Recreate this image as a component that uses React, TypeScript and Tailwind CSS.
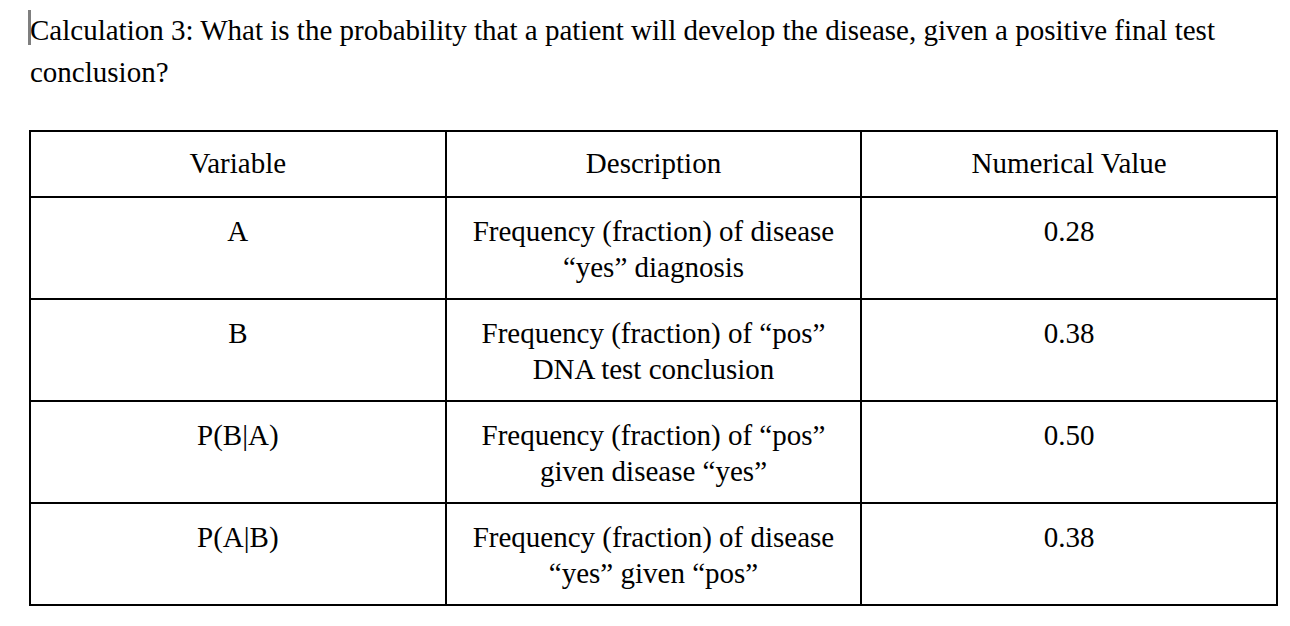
const rows = [
  { v: "A", d: ["Frequency (fraction) of disease", "“yes” diagnosis"], n: "0.28" },
  { v: "B", d: ["Frequency (fraction) of “pos”", "DNA test conclusion"], n: "0.38" },
  { v: "P(B|A)", d: ["Frequency (fraction) of “pos”", "given disease “yes”"], n: "0.50" },
  { v: "P(A|B)", d: ["Frequency (fraction) of disease", "“yes” given “pos”"], n: "0.38" },
];

export default function App() {
  return (
    <div className="min-h-[626px] w-[1290px] bg-white text-black font-['Liberation_Serif',serif] text-[29px]">
      {/* Question */}
      <div className="relative pl-[30px] pt-[9px] leading-[42px]">
        <span className="absolute left-[28px] top-[10px] h-[35px] w-[3px] bg-[#7f7f7f]" />
        <p>
          Calculation 3: What is the probability that a patient will develop the disease, given a positive final test
          <br />
          conclusion?
        </p>
      </div>

      {/* Table */}
      <div className="pl-[29px] pt-[37px]">
        <table className="w-[1249px] table-fixed border-collapse border-2 border-black">
          <thead>
            <tr>
              <th className="h-[66px] border-2 border-black px-4 pt-[13px] pb-[15px] text-center align-top font-normal leading-[36px]">
                Variable
              </th>
              <th className="border-2 border-black px-4 pt-[13px] pb-[15px] text-center align-top font-normal leading-[36px]">
                Description
              </th>
              <th className="border-2 border-black px-4 pt-[13px] pb-[15px] text-center align-top font-normal leading-[36px]">
                Numerical Value
              </th>
            </tr>
          </thead>
          <tbody>
            {rows.map((r) => (
              <tr key={r.v + r.n}>
                <td className="h-[102px] border-2 border-black px-4 pt-[15px] text-center align-top leading-[36px]">
                  {r.v}
                </td>
                <td className="border-2 border-black px-4 pt-[15px] text-center align-top leading-[36px]">
                  {r.d[0]}
                  <br />
                  {r.d[1]}
                </td>
                <td className="border-2 border-black px-4 pt-[15px] text-center align-top leading-[36px]">
                  {r.n}
                </td>
              </tr>
            ))}
          </tbody>
        </table>
      </div>
    </div>
  );
}
